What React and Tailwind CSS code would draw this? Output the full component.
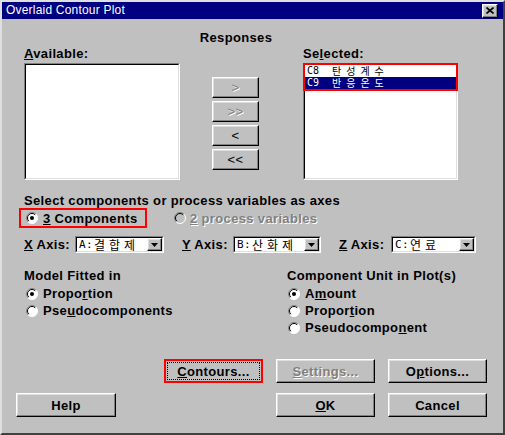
import React from 'react';

const RAISED =
  'bg-[#c0c0c0] border border-t-white border-l-white border-r-black border-b-black shadow-[inset_-1px_-1px_0_#808080,inset_1px_1px_0_#dfdfdf]';
const KO = "font-['Noto_Sans_CJK_KR','Noto_Sans_CJK_SC',sans-serif]";
const DISABLED = 'text-[#808080] [text-shadow:1px_1px_0_#fff]';

function Radio({ checked, disabled }) {
  return (
    <svg width="12" height="12" viewBox="0 0 12 12" className="shrink-0">
      <circle cx="6" cy="6" r="5.5" fill={disabled ? '#c0c0c0' : '#fff'} />
      <path d="M9.9 2.1 A5.5 5.5 0 0 0 2.1 9.9" stroke="#808080" strokeWidth="1" fill="none" />
      <path d="M9.2 2.8 A4.5 4.5 0 0 0 2.8 9.2" stroke="#000" strokeWidth="1" fill="none" />
      <path d="M9.9 2.1 A5.5 5.5 0 0 1 2.1 9.9" stroke="#fff" strokeWidth="1" fill="none" />
      {checked && <circle cx="6" cy="6" r="2" fill="#000" />}
    </svg>
  );
}

function Option({ checked, children }) {
  return (
    <div className="flex items-center h-[17px]">
      <Radio checked={checked} />
      <span className="ml-[5px]">{children}</span>
    </div>
  );
}

function Sunken({ className = '', children }) {
  return (
    <div className={`border border-t-[#808080] border-l-[#808080] border-b-white border-r-white ${className}`}>
      <div className="h-full border border-t-black border-l-black border-b-[#dfdfdf] border-r-[#dfdfdf] bg-white">
        {children}
      </div>
    </div>
  );
}

function Combo({ width, prefix, text }) {
  return (
    <Sunken className={`${width} h-[17px]`}>
      <div className="flex h-full">
        <div className={`flex-1 flex items-center pl-[2px] text-[12px] font-normal leading-none ${KO}`}>
          <span className="font-['DejaVu_Sans_Mono',monospace] text-[11px]">{prefix}</span>
          <span className="tracking-[4px] ml-[1px]">{text}</span>
        </div>
        <div className={`${RAISED} w-[15px] h-full flex items-center justify-center`}>
          <svg width="7" height="4" viewBox="0 0 7 4">
            <path d="M0 0 H7 L3.5 4 Z" fill="#000" />
          </svg>
        </div>
      </div>
    </Sunken>
  );
}

function Btn({ width, disabled, children }) {
  return (
    <div className={`${RAISED} ${width} h-[24px] flex items-center justify-center ${disabled ? DISABLED : ''}`}>
      {children}
    </div>
  );
}

function MoveBtn({ disabled, children }) {
  return (
    <div className={`${RAISED} w-[47px] h-[21px] flex items-center justify-center font-normal text-[13px] ${disabled ? DISABLED : ''}`}>
      {children}
    </div>
  );
}

function ListRow({ selected, code, text }) {
  return (
    <div className={`flex items-center h-[12px] pl-[2px] ${selected ? 'bg-[#000080] text-white' : ''}`}>
      <span className="w-[25px] font-['DejaVu_Sans_Mono',monospace] text-[10px] leading-[12px]">{code}</span>
      <span className="tracking-[5px] text-[10px] leading-[12px]">{text}</span>
    </div>
  );
}

export default function App() {
  return (
    <div className="w-[505px] h-[435px] bg-[#c0c0c0] border-2 border-t-[#dfdfdf] border-l-[#dfdfdf] border-r-[#404040] border-b-[#404040] font-['Liberation_Sans',Arial,sans-serif] text-[13px] font-bold tracking-[0.35px] leading-[15px] text-black overflow-hidden">
      {/* title bar */}
      <div className="h-[17px] bg-[#000080] flex items-center justify-between pl-[4px] pr-[5px]">
        <span className="text-white font-normal text-[12px] tracking-[0.2px]">Overlaid Contour Plot</span>
        <div className={`${RAISED} w-[16px] h-[14px] flex items-center justify-center`}>
          <svg width="8" height="7" viewBox="0 0 8 7">
            <path d="M0.5 0.5 L7.5 6.5 M7.5 0.5 L0.5 6.5" stroke="#000" strokeWidth="1.6" />
          </svg>
        </div>
      </div>

      <div className="w-[468px] text-center mt-[11px] h-[15px]">Responses</div>

      {/* lists */}
      <div className="flex mt-[1px] ml-[22px]">
        <div className="w-[156px]">
          <div className="h-[15px]"><span className="underline">A</span>vailable:</div>
          <Sunken className="mt-[2px] h-[117px]" />
        </div>
        <div className="ml-[32px] pt-[31px] flex flex-col gap-[3px]">
          <MoveBtn disabled>&gt;</MoveBtn>
          <MoveBtn disabled>&gt;&gt;</MoveBtn>
          <MoveBtn>&lt;</MoveBtn>
          <MoveBtn>&lt;&lt;</MoveBtn>
        </div>
        <div className="ml-[44px] w-[155px]">
          <div className="h-[15px]">Se<span className="underline">l</span>ected:</div>
          <Sunken className="mt-[2px] h-[117px]">
            <div className={`-mx-[2px] -mt-[2px] border-2 border-[#ff0000] font-normal tracking-normal ${KO}`}>
              <ListRow code="C8" text="탄성계수" />
              <ListRow selected code="C9" text="반응온도" />
            </div>
          </Sunken>
        </div>
      </div>

      <div className="mt-[13px] ml-[22px] h-[15px]">Select components or process variables as axes</div>

      <div className="flex items-center h-[20px] ml-[17px]">
        <div className="w-[128px] h-[20px] border-2 border-[#ff0000] flex items-center pl-[5px]">
          <Radio checked />
          <span className="ml-[5px]"><span className="underline">3</span> Components</span>
        </div>
        <div className="ml-[27px] flex items-center">
          <Radio disabled />
          <span className={`ml-[4px] ${DISABLED}`}><span className="underline">2</span> process variables</span>
        </div>
      </div>

      {/* axes */}
      <div className="flex items-center mt-[8px] h-[17px] ml-[22px]">
        <span className="w-[51px]"><span className="underline">X</span> Axis:</span>
        <Combo width="w-[89px]" prefix="A:" text="결합제" />
        <span className="ml-[18px] w-[51px]"><span className="underline">Y</span> Axis:</span>
        <Combo width="w-[88px]" prefix="B:" text="산화제" />
        <span className="ml-[18px] w-[52px]"><span className="underline">Z</span> Axis:</span>
        <Combo width="w-[85px]" prefix="C:" text="연료" />
      </div>

      {/* model / units */}
      <div className="flex mt-[15px] ml-[22px]">
        <div className="w-[263px]">
          <div className="h-[15px]">Model Fitted in</div>
          <div className="mt-[2px] ml-[2px]">
            <Option checked>Propo<span className="underline">r</span>tion</Option>
            <Option>Pse<span className="underline">u</span>docomponents</Option>
          </div>
        </div>
        <div>
          <div className="h-[15px]">Component Unit in Plot(s)</div>
          <div className="mt-[2px] ml-[1px]">
            <Option checked>A<span className="underline">m</span>ount</Option>
            <Option>Propor<span className="underline">t</span>ion</Option>
            <Option>Pseudocompo<span className="underline">n</span>ent</Option>
          </div>
        </div>
      </div>

      {/* buttons */}
      <div className="flex mt-[23px] ml-[162px]">
        <div className="w-[99px] h-[24px] border-2 border-[#ff0000] bg-[#c0c0c0] p-[1px]">
          <div className="h-full border border-dotted border-black flex items-center justify-center">
            <span><span className="underline">C</span>ontours...</span>
          </div>
        </div>
        <div className="ml-[13px]">
          <Btn width="w-[99px]" disabled><span><span className="underline">S</span>ettings...</span></Btn>
        </div>
        <div className="ml-[13px]">
          <Btn width="w-[99px]">O<span className="underline">p</span>tions...</Btn>
        </div>
      </div>
      <div className="flex mt-[10px] ml-[14px]">
        <Btn width="w-[100px]">Help</Btn>
        <div className="ml-[160px]">
          <Btn width="w-[99px]"><span className="underline">O</span>K</Btn>
        </div>
        <div className="ml-[13px]">
          <Btn width="w-[99px]">Cancel</Btn>
        </div>
      </div>
    </div>
  );
}
